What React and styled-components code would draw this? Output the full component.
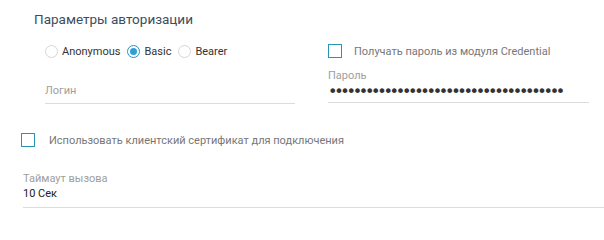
import React from "react";
import styled, { createGlobalStyle } from "styled-components";

const Global = createGlobalStyle`
  html, body { margin: 0; padding: 0; background: #fff; }
  body { font-family: Roboto, "Noto Sans", sans-serif; }
  * { box-sizing: border-box; }
`;

const Page = styled.div`
  width: 604px;
  height: 226px;
  display: flex;
  flex-direction: column;
  padding-top: 9px;
`;

const Title = styled.div`
  margin-left: 34px;
  font-size: 13.5px;
  line-height: 20px;
  color: #3d4d5c;
  height: 20px;
`;

const Columns = styled.div`
  display: flex;
  margin-top: 11px;
`;

const Column = styled.div`
  display: flex;
  flex-direction: column;
  margin-left: ${(p) => p.$left}px;
  width: ${(p) => p.$width}px;
`;

const RadioRow = styled.div`
  display: flex;
  align-items: center;
  height: 22px;
`;

const RadioItem = styled.label`
  display: flex;
  align-items: center;
  gap: 4px;
  margin-right: 7px;
  font-size: 11px;
  color: #333;
`;

const RadioCircle = styled.span`
  width: 13px;
  height: 13px;
  border-radius: 50%;
  border: 1px solid ${(p) => (p.$checked ? "#2f8fb8" : "#d6d6d6")};
  display: flex;
  align-items: center;
  justify-content: center;
  &::after {
    content: "";
    display: ${(p) => (p.$checked ? "block" : "none")};
    width: 7px;
    height: 7px;
    border-radius: 50%;
    background: #2f9fd3;
  }
`;

const CheckRow = styled.label`
  display: flex;
  align-items: center;
  height: 22px;
  font-size: 11px;
  color: #777;
  margin-left: ${(p) => p.$left || 0}px;
  margin-top: ${(p) => p.$top || 0}px;
`;

const Box = styled.span`
  width: 14px;
  height: 14px;
  border: 1.5px solid #2a93b3;
  margin-right: ${(p) => p.$gap}px;
  flex: none;
`;

const Field = styled.div`
  display: flex;
  flex-direction: column;
  border-bottom: 1px solid #dcdcdc;
  margin-top: ${(p) => p.$top}px;
  margin-left: ${(p) => p.$left || 0}px;
  width: ${(p) => p.$width}px;
`;

const FieldLabel = styled.div`
  font-size: 11px;
  line-height: 14px;
  color: #9e9e9e;
`;

const FieldValue = styled.div`
  font-size: 11px;
  line-height: 16px;
  color: #222;
  padding-bottom: 5px;
`;

const Dots = styled.div`
  font-size: 16px;
  line-height: 18px;
  height: 19px;
  color: #333;
  letter-spacing: -3.28px;
  font-family: "DejaVu Sans", sans-serif;
  white-space: nowrap;
`;

const Placeholder = styled.div`
  font-size: 11px;
  line-height: 14px;
  color: #9e9e9e;
  padding-bottom: 5px;
`;

export default function App() {
  return (
    <>
      <Global />
      <Page>
        <Title>Параметры авторизации</Title>
        <Columns>
          <Column $left={45} $width={250}>
            <RadioRow>
              <RadioItem>
                <RadioCircle />
                Anonymous
              </RadioItem>
              <RadioItem>
                <RadioCircle $checked />
                Basic
              </RadioItem>
              <RadioItem>
                <RadioCircle />
                Bearer
              </RadioItem>
            </RadioRow>
            <Field $top={22} $width={250}>
              <Placeholder>Логин</Placeholder>
            </Field>
          </Column>
          <Column $left={33} $width={261}>
            <CheckRow>
              <Box $gap={12} />
              Получать пароль из модуля Credential
            </CheckRow>
            <Field $top={7} $width={261}>
              <FieldLabel>Пароль</FieldLabel>
              <Dots>{"•".repeat(38)}</Dots>
            </Field>
          </Column>
        </Columns>
        <CheckRow $left={21} $top={25}>
          <Box $gap={14} />
          Использовать клиентский сертификат для подключения
        </CheckRow>
        <Field $top={21} $left={23} $width={581}>
          <FieldLabel>Таймаут вызова</FieldLabel>
          <FieldValue>10 Сек</FieldValue>
        </Field>
      </Page>
    </>
  );
}
